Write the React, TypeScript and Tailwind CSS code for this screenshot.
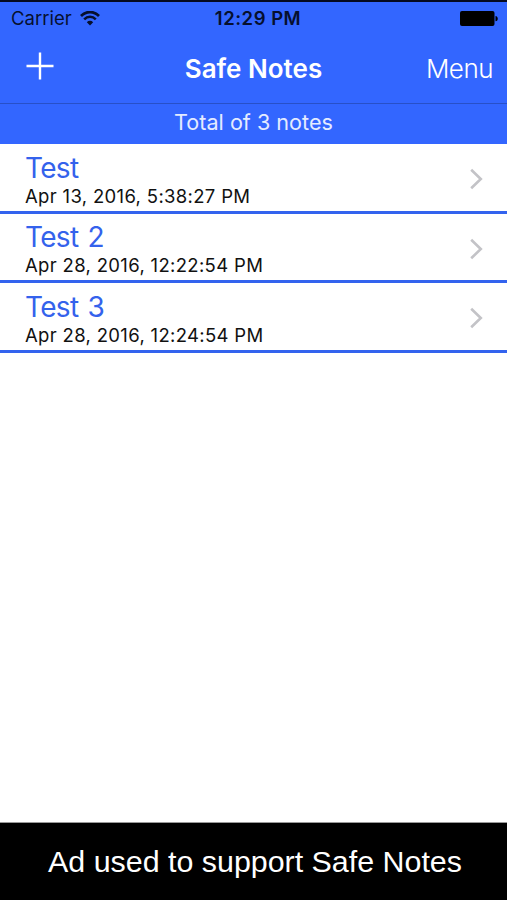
import React from 'react';

interface Note {
  id: number;
  title: string;
  date: string;
}

const notes: Note[] = [
  { id: 1, title: 'Test', date: 'Apr 13, 2016, 5:38:27 PM' },
  { id: 2, title: 'Test 2', date: 'Apr 28, 2016, 12:22:54 PM' },
  { id: 3, title: 'Test 3', date: 'Apr 28, 2016, 12:24:54 PM' },
];

const WifiIcon = () => (
  <svg className="mb-px" width="20" height="15" viewBox="0 0 20 15" fill="none" stroke="#06102e">
    <path d="M1 5C6-.3 14-.3 19 5" strokeWidth="2.7" />
    <path d="M4.2 8.4c3.3-3.4 8.3-3.4 11.6 0" strokeWidth="2.5" />
    <path d="M10 14.4 6.8 11.2c1.8-1.8 4.6-1.8 6.4 0z" fill="#06102e" stroke="none" />
  </svg>
);

const BatteryIcon = () => (
  <svg className="mb-px" width="38" height="15" viewBox="0 0 38 15" fill="#000">
    <rect width="34.5" height="15" rx="2" />
    <path d="M35.5 5c3 .5 3 4.8 0 5.3z" />
  </svg>
);

const NoteRow = ({ note }: { note: Note }) => (
  <li className="flex h-[69.6px] flex-col">
    <div className="flex min-h-0 flex-1 items-center justify-between pl-[25px] pr-[24px]">
      <div className="whitespace-nowrap">
        <h2 className="mt-[4px] text-[28px] leading-[34px] font-normal tracking-[-0.7px] [word-spacing:2px] text-[#3462ec]">{note.title}</h2>
        <p className="text-[18.5px] leading-[23px] tracking-[0.33px] text-[#111]">{note.date}</p>
      </div>
      <svg className="mt-[4px]" width="13" height="22" viewBox="0 0 13 22" fill="none" stroke="#c3c3c7" strokeWidth="2.6">
        <path d="m1.2 1.7 9.6 9.3-9.6 9.3" />
      </svg>
    </div>
    <div className="h-[3px] bg-[#3363ee]" />
  </li>
);

export default function App() {
  return (
    <div className="flex h-[900px] w-[507px] flex-col overflow-hidden bg-white font-['Inter',sans-serif]">
      <header className="flex h-[144px] flex-col border-t-2 border-[#050a20] bg-[#3366ff] text-white">
        {/* Status bar */}
        <div className="grid h-[33px] grid-cols-3 items-center whitespace-nowrap pl-[11px] pr-[9px] text-[18.5px] text-[#06102e]">
          <div className="flex items-center gap-[8px]">
            <span>Carrier</span>
            <WifiIcon />
          </div>
          <span className="pl-[7px] text-center font-semibold tracking-[0.5px]">12:29 PM</span>
          <div className="flex justify-end"><BatteryIcon /></div>
        </div>

        {/* Navigation bar */}
        <div className="grid h-[69px] grid-cols-3 items-center whitespace-nowrap border-b border-[#2850c8] pb-[2px] pl-[26px] pr-[14px] text-[26px]">
          <svg className="mb-[4px]" width="28" height="28" viewBox="0 0 28 28" fill="none" stroke="#fff" strokeWidth="2.4">
            <path d="M.5 14h27M14 .5v27" />
          </svg>
          <h1 className="pr-[12px] text-center font-semibold">Safe Notes</h1>
          <span className="text-right font-light tracking-[-0.5px]">Menu</span>
        </div>

        <div className="flex flex-1 items-center justify-center pb-[3px] text-[21.6px] text-[#e4ebff]">
          Total of 3 notes
        </div>
      </header>

      <ul className="flex-1">
        {notes.map((note) => (
          <NoteRow key={note.id} note={note} />
        ))}
      </ul>

      <footer className="flex h-[78px] items-center justify-center whitespace-nowrap border-t border-[#999] bg-black pl-[3px] text-[30.4px] text-white font-['Liberation_Sans',Arial,sans-serif]">
        Ad used to support Safe Notes
      </footer>
    </div>
  );
}
